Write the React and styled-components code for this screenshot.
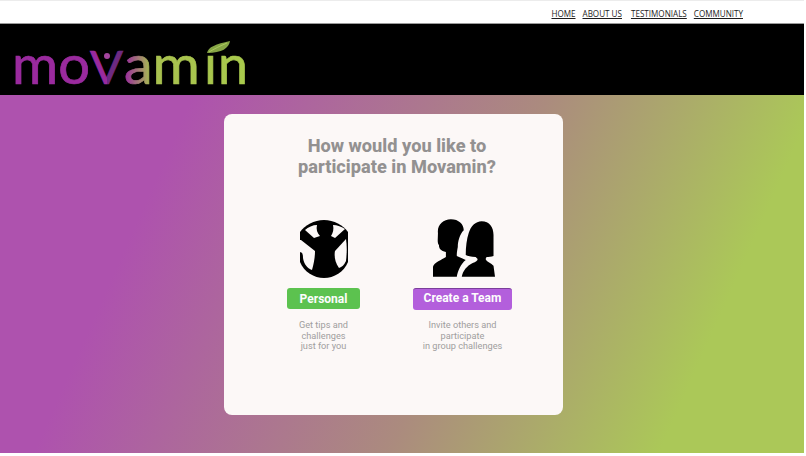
import styled, { createGlobalStyle } from "styled-components";

const GlobalStyle = createGlobalStyle`
  html, body {
    margin: 0;
    padding: 0;
    background: #fff;
  }
  body {
    font-family: "Roboto", "Liberation Sans", sans-serif;
  }
`;

const Page = styled.div`
  display: flex;
  flex-direction: column;
  width: 804px;
  height: 456px;
  overflow: hidden;
`;

const TopBar = styled.nav`
  display: flex;
  justify-content: flex-end;
  align-items: center;
  height: 20px;
  padding: 2px 61px 0 0;
  border-top: 1px solid #ececec;
  border-bottom: 1px solid #9a9a9a;
  font-family: "Open Sans", sans-serif;
`;

const NavLink = styled.a`
  margin-left: ${({ gap }) => gap}px;
  font-size: 8.1px;
  color: #1c1c1c;
  text-decoration: underline;
  cursor: pointer;
`;

const Banner = styled.header`
  display: flex;
  height: 71px;
  background: #000;
`;

const Logo = styled.svg`
  display: block;
  width: 260px;
  height: 71px;
`;

const LogoText = styled.text`
  font-family: "Lato", sans-serif;
  font-size: ${({ size }) => size}px;
  stroke-width: 0.7px;
`;

const Stage = styled.main`
  display: flex;
  height: 358px;
  padding: 19px 0 0 224px;
  box-sizing: border-box;
  background: linear-gradient(114deg, #ae52ae 20%, #ab8b7e 57%, #abc858 85%);
`;

const Card = styled.section`
  display: flex;
  flex-direction: column;
  align-items: center;
  width: 339px;
  height: 301px;
  padding: 21px 0 0 7px;
  box-sizing: border-box;
  border-radius: 8px;
  background: #fcf8f7;
`;

const Title = styled.h1`
  margin: 0;
  font-size: 18.2px;
  line-height: 21px;
  font-weight: 800;
  text-align: center;
  color: #939191;
`;

const Options = styled.div`
  display: flex;
  margin: 42px 0 0 5px;
`;

const Option = styled.div`
  display: flex;
  flex-direction: column;
  align-items: center;
  width: ${({ wide }) => (wide ? 99 : 73)}px;
  margin-left: ${({ wide }) => (wide ? 53 : 0)}px;
`;

const Figure = styled.svg`
  display: block;
  width: ${({ wide }) => (wide ? 62 : 50)}px;
  height: ${({ wide }) => (wide ? 59 : 58)}px;
  margin: ${({ wide }) => (wide ? "0 0 0 3px" : "1px 0 0")};
`;

const Choice = styled.button`
  width: 100%;
  height: ${({ wide }) => (wide ? 22 : 21)}px;
  margin-top: 10px;
  padding: 0 0 ${({ wide }) => (wide ? 3 : 0)}px;
  border: 0;
  border-top: ${({ wide }) => (wide ? "1px solid #7b3f9a" : "0")};
  border-radius: 3px;
  font-family: inherit;
  font-size: 12px;
  font-weight: 700;
  color: #fdfdfd;
  background: ${({ wide }) => (wide ? "#b35fdc" : "#5cc24f")};
  cursor: pointer;
`;

const Blurb = styled.p`
  margin: ${({ wide }) => (wide ? 10 : 11)}px 0 0;
  font-size: 9.2px;
  line-height: 10.5px;
  text-align: center;
  white-space: nowrap;
  color: #a09e9e;
`;

function MovaminLogo() {
  return (
    <Logo viewBox="0 0 260 71">
      <defs>
        <linearGradient id="word" gradientUnits="userSpaceOnUse" x1="0" y1="0" x2="260" y2="0">
          <stop offset="0.48" stopColor="#9a2a9e" />
          <stop offset="0.58" stopColor="#a8c04f" />
          <stop offset="1" stopColor="#a9cc4c" />
        </linearGradient>
        <linearGradient id="vee" gradientUnits="userSpaceOnUse" x1="88" y1="0" x2="125" y2="0">
          <stop offset="0.52" stopColor="#9a2a9e" />
          <stop offset="0.52" stopColor="#6d2a82" />
        </linearGradient>
        <clipPath id="stem">
          <rect x="200" y="31" width="17" height="40" />
        </clipPath>
      </defs>
      <LogoText size={54} x="12" y="59.5" textLength="78" lengthAdjust="spacingAndGlyphs" fill="url(#word)" stroke="url(#word)">
        mo
      </LogoText>
      <LogoText size={47} x="90" y="59.5" textLength="33" lengthAdjust="spacingAndGlyphs" fill="url(#vee)" stroke="url(#vee)">
        V
      </LogoText>
      <circle cx="107" cy="32" r="3" fill="#a4459e" />
      <LogoText size={54} x="124" y="59.5" textLength="76" lengthAdjust="spacingAndGlyphs" fill="url(#word)" stroke="url(#word)">
        am
      </LogoText>
      <g clipPath="url(#stem)">
        <LogoText size={54} x="204" y="59.5" fill="url(#word)" stroke="url(#word)">
          i
        </LogoText>
      </g>
      <LogoText size={54} x="218" y="59.5" textLength="30" lengthAdjust="spacingAndGlyphs" fill="url(#word)" stroke="url(#word)">
        n
      </LogoText>
      <path d="M207 29C208 23 216 20 230 17C229 24 222 29 207 29Z" fill="#86a545" />
      <path d="M209 28C214 25 220 22 227 19" stroke="#b5d264" strokeWidth="0.8" fill="none" />
    </Logo>
  );
}

export default function App() {
  return (
    <>
      <GlobalStyle />
      <Page>
        <TopBar>
          <NavLink gap={0}>HOME</NavLink>
          <NavLink gap={7}>ABOUT US</NavLink>
          <NavLink gap={9}>TESTIMONIALS</NavLink>
          <NavLink gap={7}>COMMUNITY</NavLink>
        </TopBar>
        <Banner>
          <MovaminLogo />
        </Banner>
        <Stage>
          <Card>
            <Title>
              How would you like to
              <br />
              participate in Movamin?
            </Title>
            <Options>
              <Option>
                <Figure viewBox="0 0 50 58">
                  <path
                    d="M25 0C15 0 6 5 1 12L1 42C5 52 15 58 25 58C35 58 45 52 49 42L49 12C44 5 35 0 25 0Z"
                    fill="#000"
                  />
                  <path d="M6 10C9 7 14 5 18 5C17 9 18 13 21 16L15 18Z" fill="#fcf8f7" />
                  <path d="M46 9C43 7 38 5 34 5C35 9 34 13 32 16L36 18Z" fill="#fcf8f7" />
                  <path
                    d="M0 20L2 20L16 31C16 37 15 43 13 50C8 48 5 44 4 38C4 33 3 32 0 32Z"
                    fill="#fcf8f7"
                  />
                  <path
                    d="M47 19L36 31C35 36 36 43 40 48C43 47 45 45 47 41C48 32 48 26 47 19Z"
                    fill="#fcf8f7"
                  />
                </Figure>
                <Choice>Personal</Choice>
                <Blurb>
                  Get tips and
                  <br />
                  challenges
                  <br />
                  just for you
                </Blurb>
              </Option>
              <Option wide>
                <Figure wide viewBox="0 0 62.5 59">
                  <path
                    d="M0 58L0 48C1 43 9 41 13 38L13 33C8 32 6 30 6 26C4 24 5 19 5 14C4 6 10 0 18 0C26 0 31 5 31 11C27 15 25 22 25 28C24 33 24 35 24 37C28 39 31 40 33 41C28 45 25 52 24 58Z"
                    fill="#000"
                  />
                  <path
                    d="M29 58C30 52 34 47 40 44C43 43 45 42 45 40L43 38C38 38 35 37 33 36C33 28 34 20 36 14C38 7 43 2 49 2C57 2 61 8 61 16L61 37C59 38 56 38 54 38L53 40C54 43 59 44 61 47L62.5 58Z"
                    fill="#000"
                  />
                </Figure>
                <Choice wide>Create a Team</Choice>
                <Blurb wide>
                  Invite others and
                  <br />
                  participate
                  <br />
                  in group challenges
                </Blurb>
              </Option>
            </Options>
          </Card>
        </Stage>
      </Page>
    </>
  );
}
